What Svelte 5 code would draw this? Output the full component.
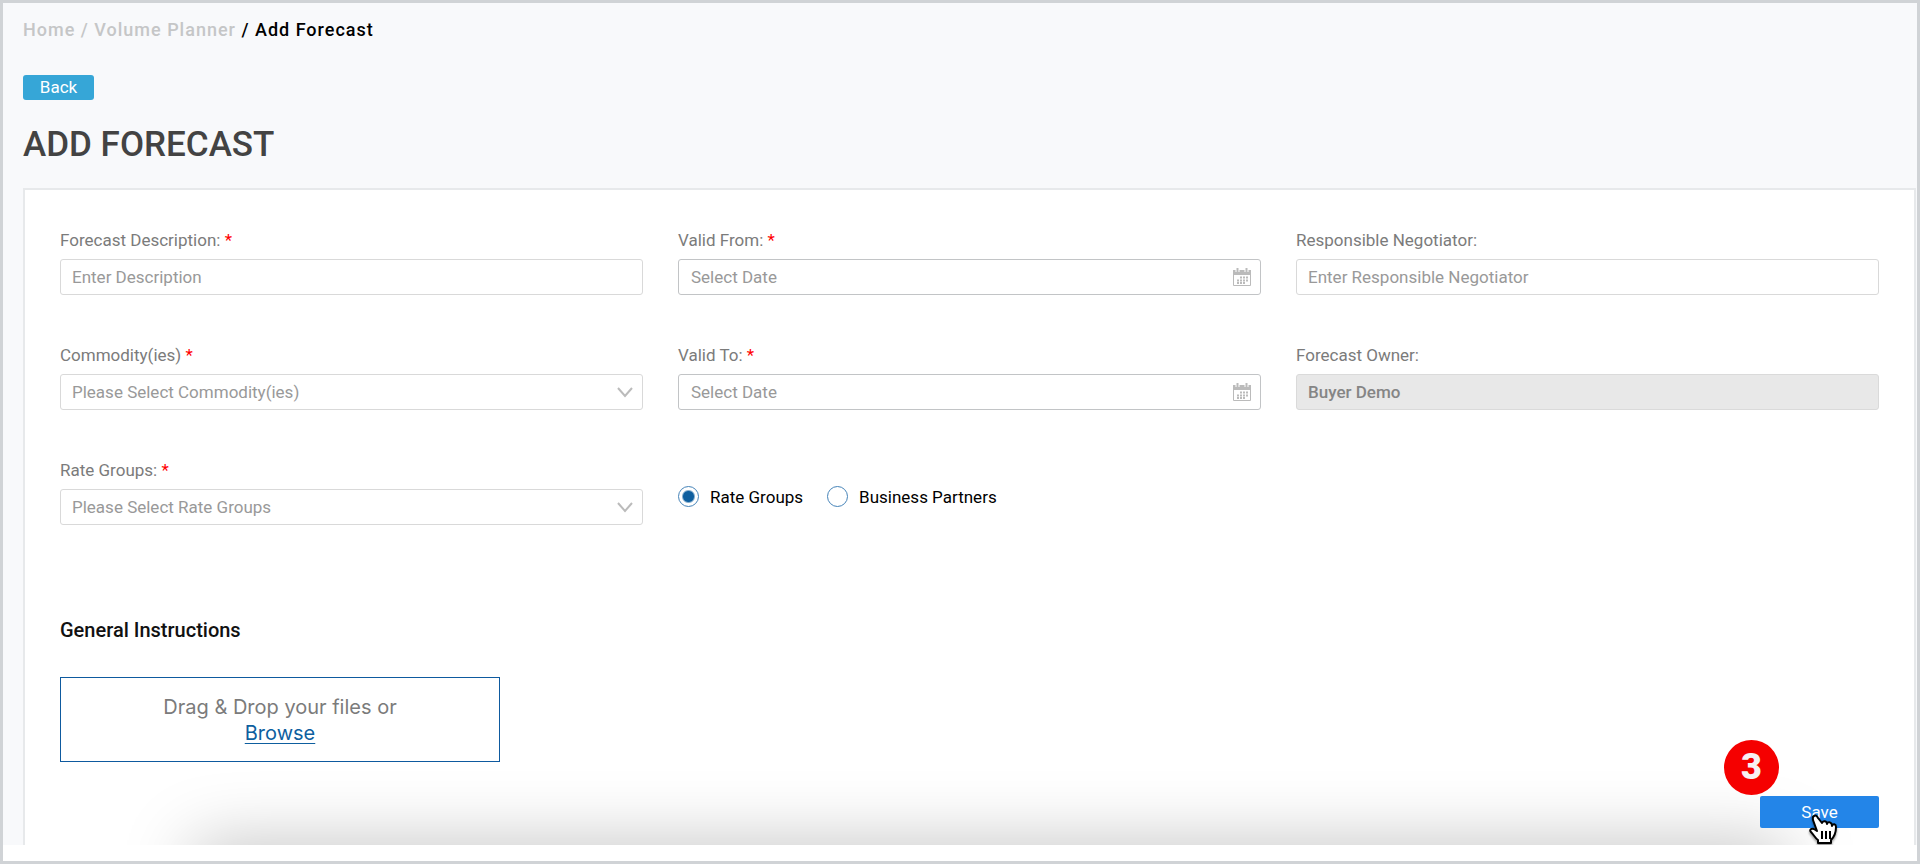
<script lang="ts">
	type Field = {
		id: string;
		label: string;
		kind: 'text' | 'date' | 'select' | 'locked';
		hint: string;
		required: boolean;
	};

	const fields: Field[] = [
		{ id: 'description', label: 'Forecast Description:', kind: 'text', hint: 'Enter Description', required: true },
		{ id: 'valid-from', label: 'Valid From:', kind: 'date', hint: 'Select Date', required: true },
		{ id: 'negotiator', label: 'Responsible Negotiator:', kind: 'text', hint: 'Enter Responsible Negotiator', required: false },
		{ id: 'commodities', label: 'Commodity(ies)', kind: 'select', hint: 'Please Select Commodity(ies)', required: true },
		{ id: 'valid-to', label: 'Valid To:', kind: 'date', hint: 'Select Date', required: true },
		{ id: 'owner', label: 'Forecast Owner:', kind: 'locked', hint: 'Buyer Demo', required: false },
		{ id: 'rate-groups', label: 'Rate Groups:', kind: 'select', hint: 'Please Select Rate Groups', required: true }
	];

	let target = $state('rate');
</script>

<div class="frame">
	<div class="page">
		<nav class="crumbs" aria-label="Breadcrumb">
			<a href="#home">Home</a> <span class="sep">/</span>
			<a href="#planner">Volume Planner</a> <span class="here">/ Add Forecast</span>
		</nav>
		<button class="back" type="button">Back</button>
		<h1>ADD FORECAST</h1>

		<form class="panel" onsubmit={(e) => e.preventDefault()}>
			<div class="grid">
				{#each fields as f}
					<div class="field {f.kind}">
						<label for={f.id}>
							{f.label}
							{#if f.required}<span class="req">*</span>{/if}
						</label>
						<div class="control">
							{#if f.kind === 'select'}
								<select id={f.id}>
									<option>{f.hint}</option>
								</select>
								<svg class="chevron" viewBox="0 0 16 12" aria-hidden="true">
									<path d="M1 2l7 8 7-8" fill="none" stroke="currentColor" stroke-width="2" />
								</svg>
							{:else if f.kind === 'locked'}
								<input id={f.id} type="text" value={f.hint} disabled />
							{:else}
								<input id={f.id} type="text" placeholder={f.hint} />
							{/if}
							{#if f.kind === 'date'}
								<svg class="calendar" viewBox="0 0 18 18" aria-hidden="true">
									<path d="M0 2h18v5H0z" fill="currentColor" />
									<path d="M.5 6v11.5h17V6" fill="none" stroke="currentColor" />
									<path d="M4.5 0v4M13.5 0v4" stroke="#fff" stroke-width="4" />
									<path d="M4.5 0v4M13.5 0v4" stroke="currentColor" stroke-width="2" />
									<path
										d="M7 9.5h8M4 12.5h11M4 15h8"
										stroke="currentColor"
										stroke-width="2"
										stroke-dasharray="2 1"
									/>
								</svg>
							{/if}
						</div>
					</div>
				{/each}

				<div class="choices" role="radiogroup" aria-label="Forecast by">
					<label><input type="radio" value="rate" bind:group={target} />Rate Groups</label>
					<label><input type="radio" value="partners" bind:group={target} />Business Partners</label>
				</div>
			</div>

			<h2>General Instructions</h2>
			<div class="drop">
				<span>Drag &amp; Drop your files or</span>
				<a href="#browse">Browse</a>
			</div>

			<div class="actions">
				<div class="save-wrap">
					<button class="save" type="submit">Save</button>
					<span class="step">3</span>
					<svg class="pointer" viewBox="0 0 28 31" aria-hidden="true">
						<path
							d="M5 2C3 3 4 5 4 6l4 11-3-2c-3-1-5 1-3 3 3 3 4 6 7 8v3h13v-3c4-4 5-8 5-13 0-3-3-4-4-1 0-4-4-5-5-2 0-3-4-4-5-1L9 4C8 2 7 1 5 2z"
							fill="#fff"
							stroke="#000"
							stroke-width="2"
							stroke-linejoin="round"
						/>
						<path d="M13 17v8M17 17v8M21 17v8" stroke="#000" stroke-width="2" />
					</svg>
				</div>
			</div>
		</form>
		<div class="under"></div>
	</div>
</div>

<style>
	:global(body) {
		background: #fff;
	}
	.frame {
		box-sizing: border-box;
		min-height: 100vh;
		padding-bottom: 16px;
		border: 3px solid #d0d3d6;
		font-family: Roboto, 'Liberation Sans', sans-serif;
		font-size: 17px;
		line-height: 20px;
		color: #7b7b7b;
	}
	.page {
		position: relative;
		display: flex;
		flex-direction: column;
		align-items: flex-start;
		padding: 16px 1px 0 20px;
		background: #f8f9fb;
		overflow: hidden;
	}
	.crumbs {
		font-size: 18px;
		font-weight: 500;
		line-height: 22px;
		letter-spacing: 1px;
		color: #c5c6c7;
	}
	.crumbs a {
		color: inherit;
		text-decoration: none;
	}
	.crumbs .here {
		color: #000;
	}
	button {
		border: 0;
		color: #fff;
		font-family: inherit;
		cursor: pointer;
	}
	.back {
		width: 71px;
		height: 25px;
		margin-top: 34px;
		padding: 0 0 2px;
		border-radius: 3px;
		background: #36a6d7;
		font-size: 17px;
	}
	h1 {
		margin: 25px 0 23px;
		font-size: 35px;
		font-weight: 500;
		line-height: 40px;
		color: #434343;
	}
	.panel {
		box-sizing: border-box;
		align-self: stretch;
		padding: 40px 35px 17px;
		border: 2px solid #e7e9eb;
		border-bottom: 0;
		background: #fff;
	}
	.grid {
		display: grid;
		grid-template-columns: repeat(3, 1fr);
		gap: 50px 35px;
	}
	.field {
		display: flex;
		flex-direction: column;
		gap: 9px;
	}
	.req {
		color: #f00;
	}
	.control {
		position: relative;
	}
	.field input,
	select {
		display: block;
		box-sizing: border-box;
		width: 100%;
		height: 36px;
		padding: 0 11px;
		border: 1px solid #d9d9d9;
		border-radius: 3px;
		background: #fff;
		font-family: inherit;
		font-size: 17px;
		color: #999;
		appearance: none;
	}
	.date input {
		padding: 0 12px;
		border-color: #c2c4c6;
	}
	.field input::placeholder {
		color: #999;
		opacity: 1;
	}
	.locked input {
		border-color: #dadada;
		background: #e8e8e8;
		font-weight: 500;
		color: #858585;
	}
	.chevron,
	.calendar {
		position: absolute;
		top: 50%;
		right: 10px;
		transform: translateY(-50%);
		color: #bbb;
		pointer-events: none;
	}
	.chevron {
		width: 16px;
		height: 12px;
	}
	.calendar {
		width: 18px;
		height: 18px;
	}
	.choices {
		display: flex;
		gap: 24px;
		align-items: center;
		align-self: center;
		padding-top: 8px;
		color: #000;
	}
	.choices label {
		display: flex;
		gap: 11px;
		align-items: center;
	}
	.choices input {
		width: 21px;
		height: 21px;
		margin: 0;
		border: 1px solid #4583b8;
		border-radius: 50%;
		background: #fff;
		appearance: none;
	}
	.choices input:checked {
		background: radial-gradient(circle, #0e5f9f 5px, #fff 7px);
	}
	h2 {
		margin: 93px 0 35px;
		font-size: 20px;
		font-weight: 500;
		line-height: 24px;
		color: #111;
	}
	.drop {
		box-sizing: border-box;
		display: flex;
		flex-direction: column;
		align-items: center;
		justify-content: center;
		width: 440px;
		height: 85px;
		border: 1px solid #0e5a9f;
		font-family: Inter, sans-serif;
		font-size: 20px;
		line-height: 26px;
	}
	.drop a {
		color: #0e5f9f;
		text-decoration-thickness: 1px;
		text-underline-offset: 3px;
	}
	.actions {
		display: flex;
		justify-content: flex-end;
		margin-top: 34px;
	}
	.save-wrap {
		position: relative;
		z-index: 1;
	}
	.save {
		display: block;
		width: 119px;
		height: 32px;
		border-radius: 2px;
		background: #2385e8;
		font-size: 17px;
	}
	.step {
		position: absolute;
		top: -56px;
		left: -36px;
		width: 55px;
		height: 55px;
		border-radius: 50%;
		background: #f50000;
		font-size: 36px;
		font-weight: 900;
		line-height: 54px;
		text-align: center;
		color: #f7f1f3;
	}
	.pointer {
		position: absolute;
		top: 18px;
		left: 49px;
		width: 28px;
		height: 31px;
		filter: drop-shadow(0 2px 1px rgba(0, 0, 0, 0.4));
	}
	/* shadow cast upwards by the footer */
	.under {
		position: absolute;
		top: 100%;
		left: 190px;
		right: 130px;
		height: 60px;
		box-shadow: 0 0 70px rgba(0, 0, 0, 0.26);
	}
</style>
